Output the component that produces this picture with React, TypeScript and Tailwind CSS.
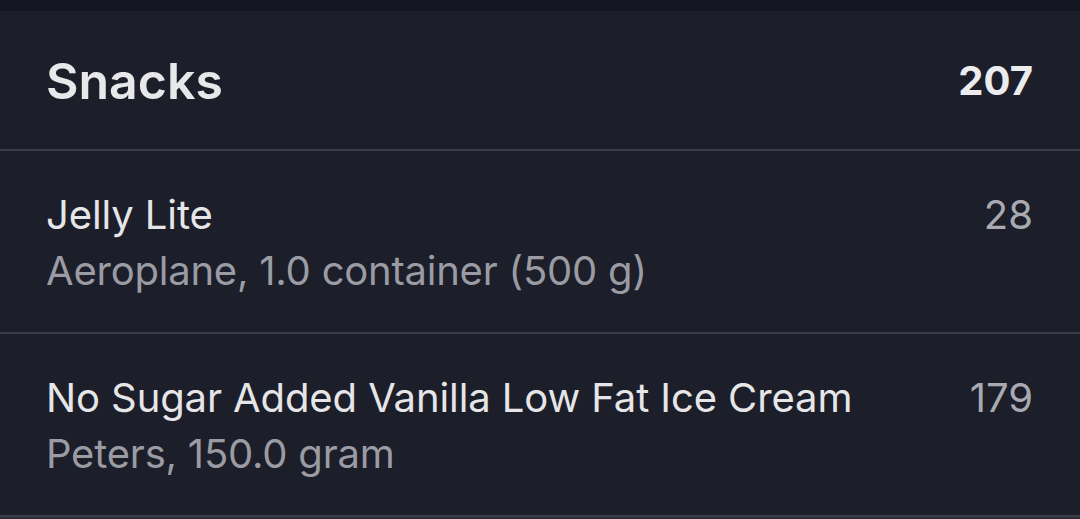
import React from "react";

const items = [
  { name: "Jelly Lite", detail: "Aeroplane, 1.0 container (500 g)", kcal: 28 },
  { name: "No Sugar Added Vanilla Low Fat Ice Cream", detail: "Peters, 150.0 gram", kcal: 179 },
];

export default function App() {
  return (
    <div className="w-[1080px] h-[519px] overflow-hidden bg-[#1c1e2a] flex flex-col" style={{ fontFamily: "Inter, 'Noto Sans', sans-serif" }}>
      <div className="h-[11px] bg-[#141722] shrink-0" />
      <div className="h-[140px] shrink-0 flex items-center justify-between pl-[46px] pr-[47px] pt-[2px] border-b-2 border-[#3a3c47]">
        <span className="text-[50px] font-semibold text-[#e8e8ea] leading-none">Snacks</span>
        <span className="text-[40px] font-bold text-[#ececee] leading-none">207</span>
      </div>
      {items.map((it) => (
        <div key={it.name} className="h-[183px] shrink-0 flex justify-between pl-[46px] pr-[47px] pt-[36px] border-b-2 border-[#3a3c47]">
          <div className="flex flex-col">
            <span className="text-[40px] leading-[56px] tracking-[-0.1px] text-[#e6e6e9]">{it.name}</span>
            <span className="text-[40px] leading-[56px] tracking-[-0.22px] text-[#9a9ba3]">{it.detail}</span>
          </div>
          <span className="text-[40px] leading-[56px] text-[#a9aab1]">{it.kcal}</span>
        </div>
      ))}
      <div className="flex-1 bg-[#2a2c37]" />
    </div>
  );
}
